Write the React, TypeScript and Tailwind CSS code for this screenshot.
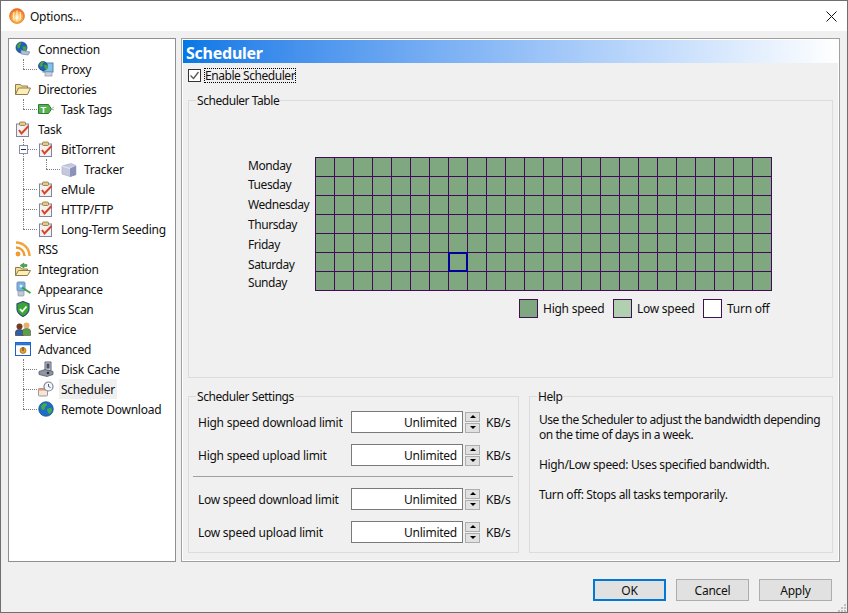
import type { ReactNode } from 'react';

const days: [string, string][] = [
    ['Monday', 'h-[19px]'],
    ['Tuesday', 'h-[19px]'],
    ['Wednesday', 'h-[20px]'],
    ['Thursday', 'h-[20px]'],
    ['Friday', 'h-[20px]'],
    ['Saturday', 'h-[20px]'],
    ['Sunday', 'h-[17px]'],
];

function Svg({ children }: { children: ReactNode }) {
    return (
        <svg width="16" height="16" viewBox="0 0 16 16" className="shrink-0">
            {children}
        </svg>
    );
}

function Globe({ cx = 6.5, cy = 6.5, r = 5.5 }: { cx?: number; cy?: number; r?: number }) {
    return (
        <>
            <circle cx={cx} cy={cy} r={r} fill="#1f62b8" stroke="#123f7c" strokeWidth="0.7" />
            <path d={`M${cx - r + 1} ${cy - 2}q2 -3 4 -3q1 2 -1 3q1 2 -1 3q-2 0 -2 -3z`} fill="#46a53c" />
            <path d={`M${cx + 1} ${cy - 1}q3 -1 4 1q0 3 -2 4q-2 -2 -2 -5z`} fill="#46a53c" />
        </>
    );
}

function Clipboard() {
    return (
        <Svg>
            <rect x="1.5" y="3" width="12" height="12.5" fill="#f4f2ee" stroke="#7f86a0" />
            <rect x="4.5" y="1" width="6" height="3.5" rx="1" fill="#e4c98a" stroke="#8d7440" strokeWidth="0.8" />
            <path d="M4 9l2.5 3.5L13.5 5" fill="none" stroke="#d9432a" strokeWidth="2" />
        </Svg>
    );
}

function FolderIcon() {
    return (
        <Svg>
            <path d="M0.5 13.5V3.5h5l1 1.5h6v2" fill="#f4dc94" stroke="#8f7c4a" />
            <path d="M0.5 13.5l3-6.5h12l-3 6.5z" fill="#fbeeb8" stroke="#8f7c4a" />
        </Svg>
    );
}

const icons: Record<string, ReactNode> = {
    connection: (
        <Svg>
            <Globe />
            <path d="M6 9l9 2-2 3-7-1z" fill="#aebfd8" stroke="#6a7f9f" strokeWidth="0.6" />
        </Svg>
    ),
    proxy: (
        <Svg>
            <rect x="5" y="2" width="10" height="9" fill="#7cc4ef" stroke="#5f7f9f" />
            <rect x="7" y="11" width="7" height="4" fill="#c9d2dd" stroke="#8794a5" strokeWidth="0.7" />
            <Globe cx={5} cy={5} r={4.5} />
        </Svg>
    ),
    folder: <FolderIcon />,
    tag: (
        <Svg>
            <path d="M0.5 3.5h10l3 4.5-3 4.5h-10z" fill="#55b24f" stroke="#2f7d33" />
            <text x="2.4" y="11.500" fontSize="9.500" fontWeight="700" fill="#fff" fontFamily="Liberation Sans, sans-serif">T</text>
            <path d="M13 8l3-2M13 8l3 1" stroke="#9a9a9a" strokeWidth="0.8" />
        </Svg>
    ),
    task: <Clipboard />,
    tracker: (
        <Svg>
            <path d="M1 5l9-2.5 5 2v9l-6 2-8-2.500z" fill="#c4c9e0" stroke="#a3a8c2" strokeWidth="0.6" />
            <path d="M1 5l8 2.500 6-3" fill="none" stroke="#e8eaf5" />
            <path d="M9 7.500v8.500l6-2v-9.500z" fill="#8d93b8" />
        </Svg>
    ),
    rss: (
        <Svg>
            <circle cx="3" cy="13" r="2.400" fill="#f09a30" />
            <path d="M1 6.500a8.500 8.500 0 0 1 8.500 8.500" fill="none" stroke="#f09a30" strokeWidth="2.400" />
            <path d="M1 1.500a13.500 13.500 0 0 1 13.500 13.500" fill="none" stroke="#f3a33c" strokeWidth="2.400" />
        </Svg>
    ),
    integration: (
        <Svg>
            <path d="M0.500 14.500V6.500h5l1 1.500h6v2" fill="#f4dc94" stroke="#8f7c4a" />
            <path d="M0.500 14.500l3-5h12l-3 5z" fill="#fbeeb8" stroke="#8f7c4a" />
            <path d="M9 2L5 4.500 9 7V5.500h3V3.500H9z" fill="#4fa83c" stroke="#2f7d33" strokeWidth="0.5" />
        </Svg>
    ),
    appearance: (
        <Svg>
            <rect x="2" y="1" width="8" height="9" rx="1" fill="#6fb4e6" stroke="#8090b0" />
            <rect x="3" y="10" width="6" height="5" rx="1" fill="#c4c9da" stroke="#8890aa" strokeWidth="0.7" />
            <path d="M7 6.500L15.500 12" stroke="#3f9a3f" strokeWidth="2" />
            <circle cx="6" cy="5" r="1.500" fill="#dfeefc" />
        </Svg>
    ),
    shield: (
        <Svg>
            <path d="M8 0.500L14 3v5c0 4-3 6-6 7.500C5 14 2 12 2 8V3z" fill="#37a637" stroke="#33506b" strokeWidth="1.200" />
            <path d="M5 8l2.300 2.500L11.500 5.500" fill="none" stroke="#fff" strokeWidth="1.800" />
        </Svg>
    ),
    service: (
        <Svg>
            <circle cx="4.500" cy="5.500" r="3" fill="#7a3a22" />
            <path d="M0.500 14.500V11q0-2.500 4-2.500t4 2.500v3.500z" fill="#2f5fa8" stroke="#2a2a2a" strokeWidth="0.6" />
            <circle cx="11.500" cy="4.500" r="3" fill="#e4b26c" />
            <path d="M7.500 14.500V10q0-2.500 4-2.500t4 2.500v4.500z" fill="#5a9e4a" stroke="#4a5a3a" strokeWidth="0.6" />
        </Svg>
    ),
    advanced: (
        <Svg>
            <rect x="0.500" y="1.500" width="15" height="13" fill="#fff" stroke="#1c62c4" />
            <rect x="0.500" y="1.500" width="15" height="2.500" fill="#2a7be0" stroke="#1c62c4" strokeWidth="0.5" />
            <circle cx="8" cy="9.500" r="3" fill="#e2a22e" stroke="#8a5a1a" strokeWidth="0.6" />
            <path d="M8 6v4" stroke="#7a4a12" strokeWidth="1.200" />
        </Svg>
    ),
    disk: (
        <Svg>
            <path d="M7 1h6v9H7z" fill="#c8ccd6" stroke="#5a6070" />
            <rect x="8.500" y="2.500" width="3" height="5" fill="#4a5062" />
            <path d="M1 10.500l6-2 8 2v3l-6 2-8-2z" fill="#8f94a2" stroke="#4a4f5c" strokeWidth="0.7" />
            <circle cx="10" cy="12" r="1.300" fill="#2a2d36" />
        </Svg>
    ),
    scheduler: (
        <Svg>
            <rect x="0.500" y="7.500" width="9" height="7.500" rx="1" fill="#f4e6da" stroke="#9a9a9a" />
            <rect x="0.500" y="7.500" width="9" height="2" fill="#e8926a" />
            <circle cx="10.500" cy="5.500" r="4.500" fill="#f2f5fa" stroke="#7d8794" strokeWidth="1.200" />
            <path d="M10.500 3v2.500l2 1" fill="none" stroke="#4a5a7a" />
        </Svg>
    ),
    remote: (
        <Svg>
            <circle cx="8" cy="8" r="7.300" fill="#1f6ec4" stroke="#124c8c" strokeWidth="0.7" />
            <path d="M3 5q3-4 6-2 0 2-2 3 0 3-2 3-2-1-2-4z" fill="#3fae4a" />
            <path d="M9 8q4-2 5 0 0 4-3 5-2-2-2-5z" fill="#3fae4a" />
        </Svg>
    ),
};

type TreeRow = {
    label: string;
    icon: string;
    level: 0 | 1 | 2;
    // connector back to the parent
    line?: 'mid' | 'last';
    pass?: boolean;
    box?: boolean;
    selected?: boolean;
};

const tree: TreeRow[] = [
    { label: 'Connection', icon: 'connection', level: 0 },
    { label: 'Proxy', icon: 'proxy', level: 1, line: 'last' },
    { label: 'Directories', icon: 'folder', level: 0 },
    { label: 'Task Tags', icon: 'tag', level: 1, line: 'last' },
    { label: 'Task', icon: 'task', level: 0 },
    { label: 'BitTorrent', icon: 'task', level: 1, line: 'mid', box: true },
    { label: 'Tracker', icon: 'tracker', level: 2, line: 'last', pass: true },
    { label: 'eMule', icon: 'task', level: 1, line: 'mid' },
    { label: 'HTTP/FTP', icon: 'task', level: 1, line: 'mid' },
    { label: 'Long-Term Seeding', icon: 'task', level: 1, line: 'last' },
    { label: 'RSS', icon: 'rss', level: 0 },
    { label: 'Integration', icon: 'integration', level: 0 },
    { label: 'Appearance', icon: 'appearance', level: 0 },
    { label: 'Virus Scan', icon: 'shield', level: 0 },
    { label: 'Service', icon: 'service', level: 0 },
    { label: 'Advanced', icon: 'advanced', level: 0 },
    { label: 'Disk Cache', icon: 'disk', level: 1, line: 'mid' },
    { label: 'Scheduler', icon: 'scheduler', level: 1, line: 'mid', selected: true },
    { label: 'Remote Download', icon: 'remote', level: 1, line: 'last' },
];

function TreeItem({ row }: { row: TreeRow }) {
    const indent = row.level === 0 ? 'pl-[6px]' : row.level === 1 ? 'pl-[29px]' : 'pl-[52px]';
    const lineX = row.level === 2 ? 'left-[37px]' : 'left-[14px]';
    return (
        <div className={`relative flex h-5 items-center ${indent}`}>
            {row.pass && <span className="absolute left-[14px] top-0 h-5 border-l border-dotted border-[#808080]" />}
            {row.line && (
                <>
                    <span
                        className={`absolute top-0 border-l border-dotted border-[#808080] ${lineX} ${row.line === 'mid' ? 'h-5' : 'h-[10px]'}`}
                    />
                    <span className={`absolute top-[10px] w-[14px] border-t border-dotted border-[#808080] ${lineX}`} />
                </>
            )}
            {row.box && (
                <span className="absolute left-[10px] top-[6px] flex h-[9px] w-[9px] items-center justify-center border border-[#8a8fa0] bg-white">
                    <span className="h-px w-[5px] bg-[#1a2a5a]" />
                </span>
            )}
            {icons[row.icon]}
            <span className={`ml-[5px] flex h-5 items-center whitespace-nowrap px-[2px] ${row.selected ? 'bg-[#f0f0f0]' : ''}`}>
                {row.label}
            </span>
        </div>
    );
}

function Group({ title, className, children }: { title: string; className: string; children: ReactNode }) {
    return (
        <div className={`flex flex-col border border-[#dcdcdc] ${className}`}>
            <div className="ml-[7px] -mt-[8px] h-[15px] w-fit bg-[#f0f0f0] px-px leading-[15px] tracking-[-0.45px]">{title}</div>
            {children}
        </div>
    );
}

function LimitRow({ label }: { label: string }) {
    return (
        <div className="flex h-[22px] items-center">
            <span className="w-[153px] shrink-0 whitespace-nowrap">{label}</span>
            <div className="flex h-[22px] w-[112px] items-center justify-end border border-[#7a7a7a] bg-white pr-[5px]">Unlimited</div>
            <div className="ml-[2px] flex w-[15px] flex-col gap-px">
                <div className="flex h-[10px] items-center justify-center border border-[#adadad] bg-[#e1e1e1]">
                    <span className="h-0 w-0 border-x-[3px] border-b-[3px] border-x-transparent border-b-black" />
                </div>
                <div className="flex h-[10px] items-center justify-center border border-[#adadad] bg-[#e1e1e1]">
                    <span className="h-0 w-0 border-x-[3px] border-t-[3px] border-x-transparent border-t-black" />
                </div>
            </div>
            <span className="ml-[6px]">KB/s</span>
        </div>
    );
}

function Swatch({ color, label, width }: { color: string; label: string; width: string }) {
    return (
        <div className={`flex items-center ${width}`}>
            <span className={`h-[19px] w-[19px] border border-[#401050] ${color}`} />
            <span className="ml-[5px] whitespace-nowrap">{label}</span>
        </div>
    );
}

export default function App() {
    return (
        <div className="flex h-[613px] w-[848px] flex-col overflow-hidden border border-[#6f6f6f] bg-[#f0f0f0] font-['Noto_Sans',sans-serif] text-[12px] leading-[15px] tracking-[-0.25px] text-[#101010]">
            <div className="flex h-[30px] shrink-0 items-center bg-white pl-2 pr-[10px]">
                <svg width="16" height="16" viewBox="0 0 16 16">
                    <defs>
                        <radialGradient id="logo" cx="50%" cy="60%" r="60%">
                            <stop offset="0%" stopColor="#fffbe0" />
                            <stop offset="50%" stopColor="#fbb64a" />
                            <stop offset="100%" stopColor="#ea5a1c" />
                        </radialGradient>
                    </defs>
                    <circle cx="8" cy="8" r="7.500" fill="url(#logo)" stroke="#e0702a" strokeWidth="0.6" />
                    <path d="M8 2.500v11M5 4q-1.500 4 0 8M11 4q1.500 4 0 8" fill="none" stroke="#fff" strokeWidth="1" opacity="0.85" />
                </svg>
                <span className="ml-[5px]">Options...</span>
                <svg width="11" height="11" viewBox="0 0 11 11" className="ml-auto">
                    <path d="M0.500 0.500l10 10M10.500 0.500l-10 10" stroke="#111" strokeWidth="1" />
                </svg>
            </div>

            <div className="box-content flex h-[524px] shrink-0 gap-[5px] pl-[7px] pr-[7px] pt-[7px]">
                <div className="h-[524px] w-[168px] shrink-0 border border-[#8f8f8f] bg-white">
                    {tree.map((row) => (
                        <TreeItem key={row.label} row={row} />
                    ))}
                </div>

                <div className="h-[524px] w-[659px] shrink-0 border border-[#a0a0a0]">
                    <div className="flex h-full flex-col border border-white">
                        <div className="flex h-[23px] shrink-0 items-center bg-gradient-to-r from-[#0078e6] to-white pl-[3px] pt-[3px] text-[16px] font-bold text-white">
                            Scheduler
                        </div>
                        <div className="flex flex-1 flex-col px-[5px]">
                            <div className="mt-[5px] flex h-[15px] items-center">
                                <span className="flex h-[13px] w-[13px] items-center justify-center border border-[#333] bg-white">
                                    <svg width="11" height="11" viewBox="0 0 11 11">
                                        <path d="M1.500 5.500l3 3 5-6.500" fill="none" stroke="#555" strokeWidth="1.300" />
                                    </svg>
                                </span>
                                <span className="ml-[3px] border border-dotted border-black leading-[13px] tracking-[-0.45px]">Enable Scheduler</span>
                            </div>

                            <Group title="Scheduler Table" className="mt-[17px] h-[278px] shrink-0">
                                <div className="ml-[59px] mt-[49px] flex items-start">
                                    <div className="-mt-px flex w-[67px] flex-col tracking-[-0.45px]">
                                        {days.map(([day, height]) => (
                                            <div key={day} className={`flex items-center ${height}`}>{day}</div>
                                        ))}
                                    </div>
                                    <div className="grid w-[457px] grid-cols-[repeat(24,19px)] grid-rows-[repeat(7,19px)] border-l border-t border-[#440a5a]">
                                        {Array.from({ length: 168 }, (_, i) => (
                                            <div key={i} className="relative border-b border-r border-[#440a5a] bg-[#80a880]">
                                                {i === 127 && (
                                                    <span className="absolute -left-px -top-px h-5 w-5 border-2 border-[#000099]" />
                                                )}
                                            </div>
                                        ))}
                                    </div>
                                </div>
                                <div className="ml-[330px] mt-[8px] flex">
                                    <Swatch color="bg-[#80a880]" label="High speed" width="w-[94px]" />
                                    <Swatch color="bg-[#b0d0b0]" label="Low speed" width="w-[90px]" />
                                    <Swatch color="bg-white" label="Turn off" width="w-[80px]" />
                                </div>
                            </Group>

                            <div className="mt-[18px] flex gap-[10px]">
                                <Group title="Scheduler Settings" className="h-[157px] w-[331px] shrink-0">
                                    <div className="mt-[7px] flex flex-col gap-[11px] pl-[9px]">
                                        <LimitRow label="High speed download limit" />
                                        <LimitRow label="High speed upload limit" />
                                    </div>
                                    <div className="mb-[11px] ml-[4px] mr-[5px] mt-[10px] h-px bg-[#a0a0a0]" />
                                    <div className="flex flex-col gap-[11px] pl-[9px]">
                                        <LimitRow label="Low speed download limit" />
                                        <LimitRow label="Low speed upload limit" />
                                    </div>
                                </Group>
                                <Group title="Help" className="h-[157px] w-[304px] shrink-0">
                                    <div className="pl-[9px] pr-[6px] pt-[8px] tracking-[-0.35px]">
                                        <p className="tracking-[-0.45px]">Use the Scheduler to adjust the bandwidth depending on the time of days in a week.</p>
                                        <p className="mt-[15px]">High/Low speed: Uses specified bandwidth.</p>
                                        <p className="mt-[15px]">Turn off: Stops all tasks temporarily.</p>
                                    </div>
                                </Group>
                            </div>
                        </div>
                    </div>
                </div>
            </div>

            <div className="relative flex flex-1 items-start justify-end gap-[10px] pr-[15px] pt-[17px]">
                <button className="h-[22px] w-[73px] border-2 border-[#0078d7] bg-[#e1e1e1]">OK</button>
                <button className="h-[22px] w-[73px] border border-[#adadad] bg-[#e1e1e1]">Cancel</button>
                <button className="h-[22px] w-[73px] border border-[#adadad] bg-[#e1e1e1]">Apply</button>
                <svg width="9" height="9" viewBox="0 0 9 9" className="absolute bottom-0 right-0">
                    <path d="M6 1h2v2H6zM3 4h2v2H3zM6 4h2v2H6zM0 7h2v2H0zM3 7h2v2H3zM6 7h2v2H6z" fill="#bfbfbf" />
                </svg>
            </div>
        </div>
    );
}
